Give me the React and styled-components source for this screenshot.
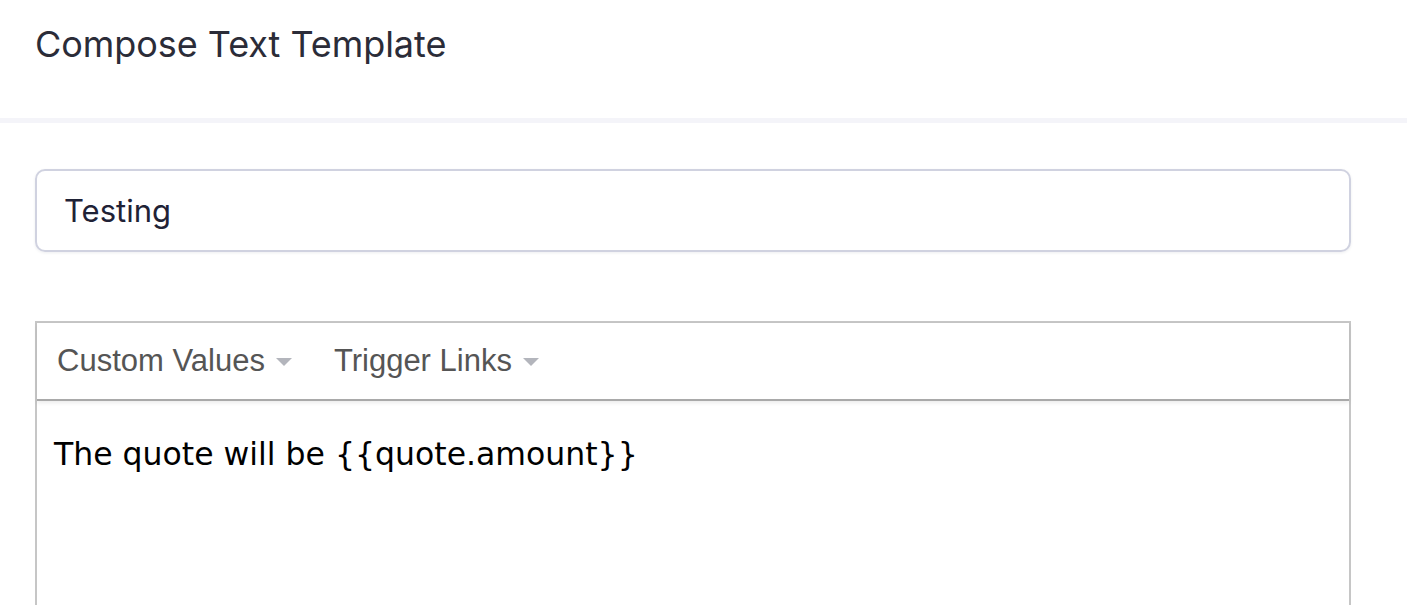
import React from "react";
import styled, { createGlobalStyle } from "styled-components";

const Global = createGlobalStyle`
  html, body {
    margin: 0;
    padding: 0;
    background: #ffffff;
    overflow: hidden;
  }
  * { box-sizing: border-box; }
`;

const Page = styled.div`
  width: 1407px;
  height: 605px;
  overflow: hidden;
  display: flex;
  flex-direction: column;
  background: #fff;
`;

const Header = styled.header`
  height: 123px;
  padding: 22px 0 0 35px;
  border-bottom: 5px solid #f4f4f9;
  flex-shrink: 0;
`;

const Title = styled.h1`
  margin: 0;
  font-family: Inter, "Noto Sans", sans-serif;
  font-weight: 400;
  font-size: 36px;
  line-height: 44px;
  color: #2b2c38;
  letter-spacing: -0.05px;
`;

const Content = styled.main`
  padding: 46px 56px 0 35px;
  display: flex;
  flex-direction: column;
  gap: 69px;
`;

const NameField = styled.div`
  height: 83px;
  border: 2px solid #d0d2e0;
  border-radius: 10px;
  box-shadow: 0 1px 3px rgba(30, 35, 70, 0.08);
  display: flex;
  align-items: center;
  padding: 0 27px;
  font-family: Inter, "Noto Sans", sans-serif;
  font-size: 31px;
  color: #1f2236;
`;

const Editor = styled.section`
  border: 2px solid #c6c6c6;
  border-bottom: none;
  min-height: 320px;
  display: flex;
  flex-direction: column;
`;

const Toolbar = styled.div`
  height: 78px;
  display: flex;
  align-items: center;
  gap: 42px;
  padding: 0 0 0 20px;
  border-bottom: 2px solid #a9a9a9;
  box-shadow: 0 2px 4px rgba(0, 0, 0, 0.08);
  position: relative;
  z-index: 1;
`;

const Dropdown = styled.div`
  display: flex;
  align-items: center;
  gap: 11px;
  font-family: "Liberation Sans", Arial, sans-serif;
  font-size: 31px;
  color: #555555;
`;

const Caret = styled.span`
  width: 0;
  height: 0;
  border-left: 8px solid transparent;
  border-right: 8px solid transparent;
  border-top: 8px solid #b3b5bc;
  margin-top: 2px;
`;

const Body = styled.div`
  padding: 33px 17px;
  font-family: "DejaVu Sans", Verdana, sans-serif;
  font-size: 31.5px;
  line-height: 40px;
  color: #000;
`;

export default function App() {
  return (
    <>
      <Global />
      <Page>
        <Header>
          <Title>Compose Text Template</Title>
        </Header>
        <Content>
          <NameField>Testing</NameField>
          <Editor>
            <Toolbar>
              <Dropdown>
                Custom Values <Caret />
              </Dropdown>
              <Dropdown>
                Trigger Links <Caret />
              </Dropdown>
            </Toolbar>
            <Body>The quote will be {"{{quote.amount}}"}</Body>
          </Editor>
        </Content>
      </Page>
    </>
  );
}
